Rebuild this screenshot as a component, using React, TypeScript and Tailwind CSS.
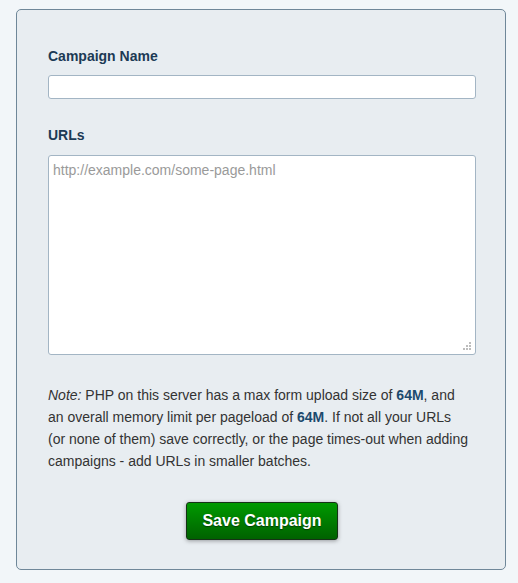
const GripDots = () => (
  <svg className="absolute right-[4px] bottom-[4px]" width="10" height="10" viewBox="0 0 10 10">
    <rect x="7" y="1" width="2" height="2" fill="#bdbdbd" />
    <rect x="4" y="4" width="2" height="2" fill="#bdbdbd" />
    <rect x="7" y="4" width="2" height="2" fill="#bdbdbd" />
    <rect x="1" y="7" width="2" height="2" fill="#bdbdbd" />
    <rect x="4" y="7" width="2" height="2" fill="#bdbdbd" />
    <rect x="7" y="7" width="2" height="2" fill="#bdbdbd" />
  </svg>
);

const App = () => {
  return (
    <div className="min-h-[583px] w-[518px] bg-[#f2f6f9] pt-[9px] pl-[16px] font-['Liberation_Sans',Arial,sans-serif]">
      <div className="w-[490px] rounded-[5px] border border-[#6f8799] bg-[#e8edf1] pt-[38px] pr-[29px] pb-[29px] pl-[31px]">
        <label className="block text-[14px] leading-[16px] font-bold text-[#1c3a55]">
          Campaign Name
        </label>
        <input
          type="text"
          className="mt-[11px] block h-[24px] w-[428px] rounded-[3px] border border-[#a3b5c4] bg-white px-[5px] text-[14px] outline-none"
        />

        <label className="mt-[28px] block text-[14px] leading-[16px] font-bold text-[#1c3a55]">
          URLs
        </label>
        <div className="relative mt-[12px] w-[428px]">
          <textarea
            placeholder="http://example.com/some-page.html"
            className="block h-[200px] w-full resize-none rounded-[3px] border border-[#a3b5c4] bg-white px-[4px] py-[6px] text-[14px] leading-[17px] text-[#333] outline-none placeholder:text-[#9a9a9a]"
          />
          <GripDots />
        </div>

        <p className="mt-[29px] whitespace-nowrap text-[14px] leading-[22px] text-[#333]">
          <em>Note:</em> PHP on this server has a max form upload size of{" "}
          <strong className="text-[#1c4a6e]">64M</strong>, and
          <br />
          an overall memory limit per pageload of <strong className="text-[#1c4a6e]">64M</strong>. If not all your URLs
          <br />
          (or none of them) save correctly, or the page times-out when adding
          <br />
          campaigns - add URLs in smaller batches.
        </p>

        <div className="mt-[30px] flex justify-center">
          <button
            type="button"
            className="h-[38px] w-[152px] rounded-[3px] border border-[#163216] bg-gradient-to-b from-[#009a00] to-[#006200] text-[16px] font-bold text-white shadow-[0_1px_4px_rgba(0,0,0,0.35)] [text-shadow:0_1px_1px_rgba(0,0,0,0.5)]"
          >
            Save Campaign
          </button>
        </div>
      </div>
    </div>
  );
};

export default App;
